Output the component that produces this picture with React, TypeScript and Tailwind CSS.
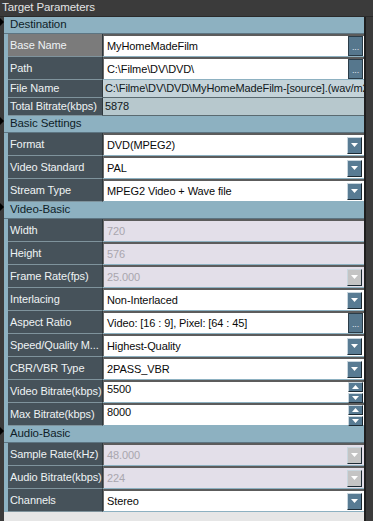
import React from "react";

type Kind =
  | "text"
  | "browse"
  | "readonly"
  | "readonly2"
  | "combo"
  | "disabled"
  | "disabledCombo"
  | "spin"
  | "dots";

type Row = { label: string; value: string; kind: Kind; selected?: boolean; short?: boolean };

const sections: { title: string; rows: Row[] }[] = [
  {
    title: "Destination",
    rows: [
      { label: "Base Name", value: "MyHomeMadeFilm", kind: "browse", selected: true },
      { label: "Path", value: "C:\\Filme\\DV\\DVD\\", kind: "browse" },
      { label: "File Name", value: "C:\\Filme\\DV\\DVD\\MyHomeMadeFilm-[source].(wav/m2v)", kind: "readonly", short: true },
      { label: "Total Bitrate(kbps)", value: "5878", kind: "readonly2", short: true },
    ],
  },
  {
    title: "Basic Settings",
    rows: [
      { label: "Format", value: "DVD(MPEG2)", kind: "combo" },
      { label: "Video Standard", value: "PAL", kind: "combo" },
      { label: "Stream Type", value: "MPEG2 Video + Wave file", kind: "combo" },
    ],
  },
  {
    title: "Video-Basic",
    rows: [
      { label: "Width", value: "720", kind: "disabled" },
      { label: "Height", value: "576", kind: "disabled" },
      { label: "Frame Rate(fps)", value: "25.000", kind: "disabledCombo" },
      { label: "Interlacing", value: "Non-Interlaced", kind: "combo" },
      { label: "Aspect Ratio", value: "Video: [16 : 9], Pixel: [64 : 45]", kind: "dots" },
      { label: "Speed/Quality M...", value: "Highest-Quality", kind: "combo" },
      { label: "CBR/VBR Type", value: "2PASS_VBR", kind: "combo" },
      { label: "Video Bitrate(kbps)", value: "5500", kind: "spin" },
      { label: "Max Bitrate(kbps)", value: "8000", kind: "spin" },
    ],
  },
  {
    title: "Audio-Basic",
    rows: [
      { label: "Sample Rate(kHz)", value: "48.000", kind: "disabledCombo" },
      { label: "Audio Bitrate(kbps)", value: "224", kind: "disabledCombo" },
      { label: "Channels", value: "Stereo", kind: "combo" },
    ],
  },
];

const btnEdge =
  "border border-t-[#c9d6de] border-l-[#c9d6de] border-r-[#1c2a33] border-b-[#1c2a33]";

function DropButton({ disabled }: { disabled?: boolean }) {
  return (
    <div
      className={
        "w-[15px] h-[17px] mr-[2px] shrink-0 flex items-center justify-center " +
        btnEdge +
        (disabled ? " bg-[#c4c4c4]" : " bg-[#587b93]")
      }
    >
      <svg width="7" height="4" viewBox="0 0 7 4">
        <path d="M0 0H7L3.5 4Z" fill="#ffffff" />
      </svg>
    </div>
  );
}

function DotsButton() {
  return (
    <div className="w-[15px] h-[20px] mr-[1px] shrink-0 flex items-end justify-center pb-[3px] bg-[#56778d] border border-[#2a3c48] text-[9px] leading-none text-[#e0eaf0]">
      ...
    </div>
  );
}

function SpinButtons() {
  return (
    <div className="flex flex-col gap-[1px] mr-[1px] shrink-0">
      {[0, 1].map((i) => (
        <div key={i} className={"w-[15px] h-[10px] flex items-center justify-center bg-[#587b93] " + btnEdge}>
          <svg width="7" height="4" viewBox="0 0 7 4">
            <path d={i === 0 ? "M0 4H7L3.5 0Z" : "M0 0H7L3.5 4Z"} fill="#ffffff" />
          </svg>
        </div>
      ))}
    </div>
  );
}

function Value({ row }: { row: Row }) {
  const { kind, value } = row;
  if (kind === "readonly" || kind === "readonly2") {
    return (
      <div
        className={
          "flex-1 min-w-0 flex items-center pl-[2px] overflow-hidden whitespace-nowrap text-[#101820] border-b border-[#5a6a70] " +
          (kind === "readonly" ? "bg-[#c4d3d9]" : "bg-[#b7c8cd]")
        }
      >
        <span className="truncate-none">{value}</span>
      </div>
    );
  }
  const disabled = kind === "disabled" || kind === "disabledCombo";
  return (
    <div
      className={
        "flex-1 min-w-0 flex items-center border-t-2 border-t-[#5c5c5c] border-l border-l-[#6a6a6a] mb-[1px] " +
        (disabled ? "bg-[#e3dfe9] text-[#a9a6ae]" : "bg-white text-[#0a0a0a]")
      }
    >
      <div
        className={
          "flex-1 min-w-0 h-full overflow-hidden whitespace-nowrap pl-[3px] " +
          (kind === "spin" ? "leading-[12px] pt-[1px]" : "flex items-center")
        }
      >
        {value}
      </div>
      {(kind === "combo" || kind === "disabledCombo") && <DropButton disabled={kind === "disabledCombo"} />}
      {(kind === "browse" || kind === "dots") && <DotsButton />}
      {kind === "spin" && <SpinButtons />}
    </div>
  );
}

export default function App() {
  return (
    <div
      className="w-[373px] h-[521px] bg-[#3b3b3b] flex flex-col overflow-hidden text-[11px] tracking-[-0.1px]"
      style={{ fontFamily: '"Liberation Sans", Arial, sans-serif' }}
    >
      <div className="h-[17px] shrink-0 flex items-center pl-[2px] text-[11.5px] text-[#e4e4e4] border-b border-[#2a2a2a]">
        Target Parameters
      </div>
      <div className="flex-1 min-h-0 flex flex-col pr-[7px]">
        {sections.map((s) => (
          <div key={s.title} className="flex min-w-0">
            <div className="w-[4px] shrink-0 pt-[1px]">
              <svg width="4" height="8" viewBox="0 0 4 8">
                <path d="M0 0L4 4L0 8Z" fill="#000000" />
              </svg>
            </div>
            <div className="flex-1 min-w-0 flex flex-col bg-[#8db1c1] border-r-2 border-[#1e1e1e]">
              <div className="h-[17px] flex items-center pl-[6px] text-[11.5px] text-[#0f1e28] border-b border-[#5d7582]">
                {s.title}
              </div>
              {s.rows.map((r) => (
                <div key={r.label} className={"flex min-w-0 ml-[4px] " + (r.short ? "h-[18px]" : "h-[23px]")}>
                  <div
                    className={
                      "w-[95px] shrink-0 flex items-center pl-[2px] whitespace-nowrap overflow-hidden text-[#eef2f4] border-b border-[#7f939c] border-r border-r-[#2e383d] " +
                      (r.selected ? "bg-[#7b7b7b]" : "bg-[#46525a]")
                    }
                  >
                    {r.label}
                  </div>
                  <Value row={r} />
                </div>
              ))}
            </div>
          </div>
        ))}
        <div className="flex-1 ml-[4px] bg-[#e6e6e6] border-r-2 border-[#1e1e1e]" />
      </div>
    </div>
  );
}
